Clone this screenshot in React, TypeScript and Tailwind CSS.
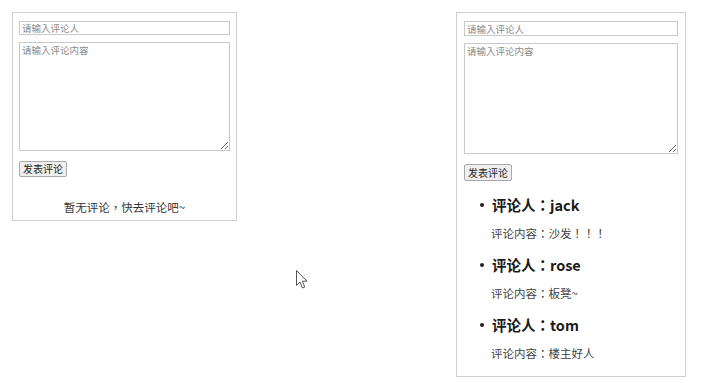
import React from "react";

const font = { fontFamily: '"Noto Sans CJK TC", "Noto Sans CJK SC", "Liberation Sans", sans-serif' };

const comments = [
  { name: "jack", content: "沙发！！！" },
  { name: "rose", content: "板凳~" },
  { name: "tom", content: "楼主好人" },
];

function Form({ textH, inputH, btnH }: { textH: string; inputH: string; btnH: string }) {
  return (
    <div className="flex flex-col">
      <input
        placeholder="请输入评论人"
        className={`${inputH} w-full border border-[#c9c9c9] px-[2px] text-[9.5px] text-[#333] outline-none placeholder:text-[#8a8a8a]`}
      />
      <textarea
        placeholder="请输入评论内容"
        className={`${textH} mt-[7px] w-full border border-[#c9c9c9] px-[2px] py-[1px] text-[9.5px] leading-[13px] text-[#333] outline-none placeholder:text-[#8a8a8a]`}
      />
      <div className="mt-[10px] flex">
        <button className={`${btnH} rounded-[2px] border border-[#a9a9a9] bg-[#efefef] px-[3px] text-[10px] leading-[14px] text-[#222]`}>
          发表评论
        </button>
      </div>
    </div>
  );
}

export default function App() {
  return (
    <div className="relative h-[383px] w-[720px] bg-white text-[#222]" style={font}>
      <div className="flex items-start gap-[219px] pl-[12px] pt-[12px]">
        {/* empty state */}
        <div className="w-[225px] border border-[#cfcfcf] px-[6px] pb-[5px] pt-[8px]">
          <Form textH="h-[109px]" inputH="h-[14px]" btnH="h-[16px]" />
          <p className="mt-[22px] text-center text-[11.5px] leading-[16px] text-[#333]">
            暂无评论，快去评论吧~
          </p>
        </div>

        {/* with list */}
        <div className="w-[230px] border border-[#cfcfcf] px-[7px] pb-[15px] pt-[8px]">
          <Form textH="h-[111px]" inputH="h-[15px]" btnH="h-[17px]" />
          <ul className="mt-[14px] flex flex-col gap-[14px]">
            {comments.map((c) => (
              <li key={c.name} className="flex flex-col">
                <div className="flex items-center">
                  <span className="ml-[16px] h-[4px] w-[4px] rounded-full bg-[#222]" />
                  <span className="ml-[8px] text-[14.5px] font-bold leading-[20px] text-[#1a1a1a]">
                    评论人：{c.name}
                  </span>
                </div>
                <p className="ml-[27px] mt-[10px] text-[11.5px] leading-[16px] text-[#444]">
                  评论内容：{c.content}
                </p>
              </li>
            ))}
          </ul>
        </div>
      </div>

      {/* mouse pointer */}
      <svg
        className="absolute left-[296px] top-[270px]"
        width="13"
        height="20"
        viewBox="0 0 13 20"
      >
        <path
          d="M0.5 0.5 L0.5 15.5 L4 12 L6.5 18 L8.8 17 L6.3 11.2 L11 11.2 Z"
          fill="#fff"
          stroke="#555"
          strokeWidth="1"
          strokeLinejoin="round"
        />
      </svg>
    </div>
  );
}
